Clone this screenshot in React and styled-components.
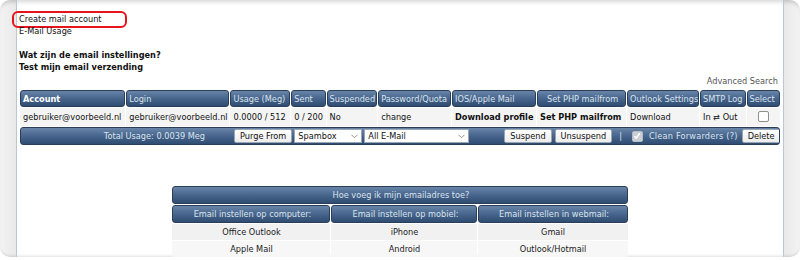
import styled, { createGlobalStyle } from "styled-components";

const GlobalStyle = createGlobalStyle`
  body {
    margin: 0;
    background: #fff;
    font-family: "DejaVu Sans", Verdana, sans-serif;
    font-size: 8.2px;
    color: #111;
  }
`;

const Frame = styled.div`
  width: 800px;
  height: 257px;
  box-sizing: border-box;
  border-radius: 10px;
  background: linear-gradient(to right, #f3f3f3 0, #e9e9e9 16px, #e9e9e9 784px, #f3f3f3 800px);
  box-shadow: inset 0 5px 4px -3px rgba(0, 0, 0, 0.18), inset 0 -3px 3px -2px rgba(0, 0, 0, 0.15);
  padding: 0 16px;
  overflow: hidden;
`;

const Panel = styled.div`
  height: 100%;
  box-sizing: border-box;
  background: #fff;
  border-left: 1px solid #bcc7d6;
  border-right: 1px solid #bcc7d6;
  box-shadow: inset 0 5px 4px -3px rgba(0, 0, 0, 0.16), inset 0 -3px 3px -2px rgba(0, 0, 0, 0.12);
  padding: 11px 2px 0 2px;
`;

const Highlight = styled.span`
  display: inline-block;
  margin-left: -7px;
  padding: 1px 23px 1px 5px;
  line-height: 11px;
  border: 2px solid #e8141c;
  border-radius: 6px;
`;

const NavLine = styled.div`
  line-height: ${(p) => p.$lh || 12}px;
  margin-top: ${(p) => p.$mt || 0}px;
  font-weight: ${(p) => (p.$bold ? "bold" : "normal")};
`;

const RightLink = styled.div`
  text-align: right;
  line-height: 12px;
  margin-top: 2px;
  padding-right: 3px;
  color: #555;
`;

const Grid = styled.table`
  width: 100%;
  table-layout: fixed;
  border-collapse: separate;
  border-spacing: 1px;
  margin-top: 2px;
  font-size: 8.2px;
`;

const HeadCell = styled.th`
  height: ${(p) => p.$h || 15}px;
  padding: 0 0 0 2px;
  text-align: ${(p) => p.$align || "left"};
  font-weight: ${(p) => (p.$bold ? "bold" : "normal")};
  color: ${(p) => (p.$bold ? "#fff" : "#dbe3ec")};
  background: linear-gradient(to bottom, #6885a8 0%, #4a6890 45%, #2f4c71 100%);
  border: 1px solid #2a3e5a;
  border-radius: 3px;
  white-space: nowrap;
  overflow: hidden;
`;

const Cell = styled.td`
  height: 18px;
  padding: 0 3px;
  background: #f4f4f4;
  font-weight: ${(p) => (p.$bold ? "bold" : "normal")};
  text-align: ${(p) => p.$align || "left"};
  white-space: nowrap;
  overflow: hidden;
`;

const ToolbarCell = styled.td`
  height: 16px;
  padding: 0;
  background: linear-gradient(to bottom, #6885a8 0%, #4a6890 45%, #2f4c71 100%);
  border: 1px solid #2a3e5a;
  border-radius: 3px;
  overflow: hidden;
`;

const Toolbar = styled.div`
  display: flex;
  align-items: center;
  color: #dbe3ec;
  height: 16px;
  white-space: nowrap;

  & > * {
    flex-shrink: 0;
  }
`;

const TotalUsage = styled.span`
  width: 184px;
  text-align: right;
  margin-right: 29px;
`;

const Button = styled.span`
  display: inline-flex;
  align-items: center;
  height: 12px;
  padding: 0 5px;
  margin-left: ${(p) => p.$ml || 0}px;
  background: linear-gradient(to bottom, #ffffff, #ececec);
  border: 1px solid #9ba6b3;
  border-radius: 2px;
  color: #111;
`;

const SelectBox = styled.span`
  display: inline-flex;
  align-items: center;
  justify-content: space-between;
  box-sizing: border-box;
  width: ${(p) => p.$w}px;
  height: 14px;
  margin-left: 2px;
  padding: 0 3px;
  background: #fff;
  border: 1px solid #9ba6b3;
  color: #111;
`;

const Divider = styled.span`
  margin: 0 10px 0 7px;
  color: #dbe3ec;
`;

const CheckMark = styled.span`
  display: inline-flex;
  align-items: center;
  justify-content: center;
  width: 9px;
  height: 9px;
  border-radius: 2px;
  background: ${(p) => (p.$checked ? "#c9ced5" : "#fff")};
  border: 1px solid ${(p) => (p.$checked ? "#b6bcc4" : "#8e8e8e")};
`;

const CheckLabel = styled.span`
  margin-left: 6px;
  letter-spacing: 0.2px;
`;

const HelpTable = styled.table`
  width: 457px;
  margin: 39px auto 0;
  table-layout: fixed;
  border-collapse: separate;
  border-spacing: 1px;
  font-size: 8.2px;
`;

const HelpCell = styled.td`
  height: 16px;
  padding: 0;
  text-align: center;
  background: ${(p) => (p.$alt ? "#f7f7f7" : "#f1f1f1")};
  color: #222;
`;

const Chevron = () => (
  <svg width="7" height="5" viewBox="0 0 7 5">
    <path d="M0.5 0.8 L3.5 3.8 L6.5 0.8" fill="none" stroke="#888" strokeWidth="0.9" />
  </svg>
);

const Tick = () => (
  <svg width="8" height="8" viewBox="0 0 8 8">
    <path d="M1.3 4.2 L3.2 6.1 L6.8 1.3" fill="none" stroke="#fff" strokeWidth="1.5" />
  </svg>
);

const columns = [
  { label: "Account", width: 104, bold: true },
  { label: "Login", width: 102 },
  { label: "Usage (Meg)", width: 59 },
  { label: "Sent", width: 34 },
  { label: "Suspended", width: 50 },
  { label: "Password/Quota", width: 72 },
  { label: "IOS/Apple Mail", width: 83 },
  { label: "Set PHP mailfrom", width: 88, align: "center" },
  { label: "Outlook Settings", width: 71 },
  { label: "SMTP Log", width: 45 },
  { label: "Select", width: 33 },
];

const helpRows = [
  ["Office Outlook", "iPhone", "Gmail"],
  ["Apple Mail", "Android", "Outlook/Hotmail"],
];

export default function App() {
  return (
    <>
      <GlobalStyle />
      <Frame>
        <Panel>
          <Highlight>Create mail account</Highlight>
          <NavLine $lh={11} $mt={-2}>E-Mail Usage</NavLine>
          <NavLine $mt={12} $bold>Wat zijn de email instellingen?</NavLine>
          <NavLine $bold>Test mijn email verzending</NavLine>
          <RightLink>Advanced Search</RightLink>

          <Grid>
            <colgroup>
              {columns.map((c) => (
                <col key={c.label} style={{ width: c.width }} />
              ))}
            </colgroup>
            <thead>
              <tr>
                {columns.map((c) => (
                  <HeadCell key={c.label} $bold={c.bold} $align={c.align}>
                    {c.label}
                  </HeadCell>
                ))}
              </tr>
            </thead>
            <tbody>
              <tr>
                <Cell>gebruiker@voorbeeld.nl</Cell>
                <Cell>gebruiker@voorbeeld.nl</Cell>
                <Cell>0.0000 / 512</Cell>
                <Cell>0 / 200</Cell>
                <Cell>No</Cell>
                <Cell>change</Cell>
                <Cell $bold>Download profile</Cell>
                <Cell $bold>Set PHP mailfrom</Cell>
                <Cell>Download</Cell>
                <Cell>In ⇄ Out</Cell>
                <Cell $align="center">
                  <CheckMark />
                </Cell>
              </tr>
              <tr>
                <ToolbarCell colSpan={11}>
                  <Toolbar>
                    <TotalUsage>Total Usage: 0.0039 Meg</TotalUsage>
                    <Button>Purge From</Button>
                    <SelectBox $w={68}>
                      Spambox <Chevron />
                    </SelectBox>
                    <SelectBox $w={105}>
                      All E-Mail <Chevron />
                    </SelectBox>
                    <Button $ml={35}>Suspend</Button>
                    <Button $ml={3}>Unsuspend</Button>
                    <Divider>|</Divider>
                    <CheckMark $checked>
                      <Tick />
                    </CheckMark>
                    <CheckLabel>Clean Forwarders (?)</CheckLabel>
                    <Button $ml={4}>Delete</Button>
                  </Toolbar>
                </ToolbarCell>
              </tr>
            </tbody>
          </Grid>

          <HelpTable>
            <colgroup>
              <col style={{ width: 158 }} />
              <col style={{ width: 146 }} />
              <col style={{ width: 149 }} />
            </colgroup>
            <thead>
              <tr>
                <HeadCell colSpan={3} $align="center" $h={16}>
                  Hoe voeg ik mijn emailadres toe?
                </HeadCell>
              </tr>
              <tr>
                <HeadCell $align="center" $h={16}>Email instellen op computer:</HeadCell>
                <HeadCell $align="center" $h={16}>Email instellen op mobiel:</HeadCell>
                <HeadCell $align="center" $h={16}>Email instellen in webmail:</HeadCell>
              </tr>
            </thead>
            <tbody>
              {helpRows.map((row, i) => (
                <tr key={row[0]}>
                  {row.map((item) => (
                    <HelpCell key={item} $alt={i % 2 === 1}>
                      {item}
                    </HelpCell>
                  ))}
                </tr>
              ))}
            </tbody>
          </HelpTable>
        </Panel>
      </Frame>
    </>
  );
}
